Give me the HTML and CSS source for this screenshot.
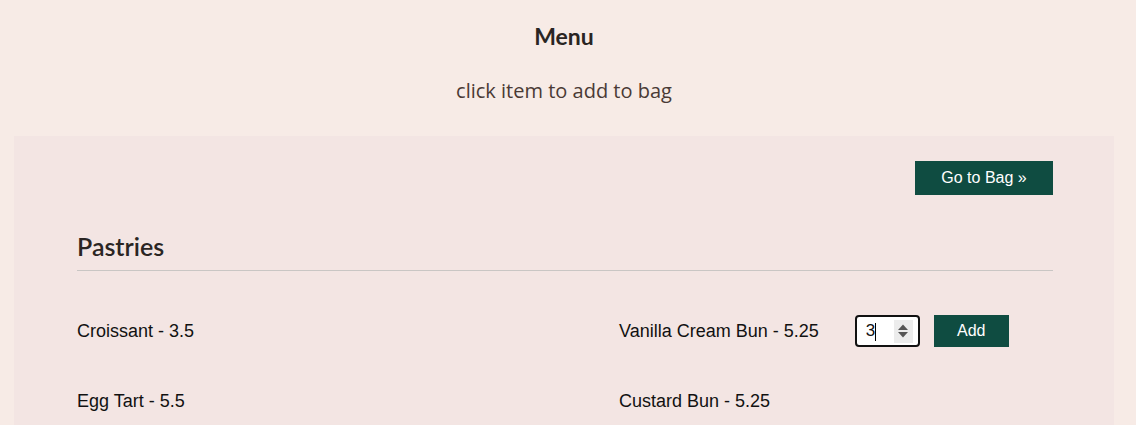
FILE: index.html
```html
<!DOCTYPE html>
<html>
<head>
<meta charset="utf-8">
<link rel="stylesheet" href="styles.css">
</head>
<body>
<header class="top">
  <h1 class="title">Menu</h1>
  <p class="subtitle">click item to add to bag</p>
</header>
<main class="panel">
  <div class="actions">
    <button class="btn bag-btn">Go to Bag »</button>
  </div>
  <section class="category">
    <h2 class="cat-title">Pastries</h2>
    <div class="items">
      <div class="item"><span class="item-name">Croissant - 3.5</span></div>
      <div class="item">
        <span class="item-name">Vanilla Cream Bun - 5.25</span>
        <div class="qty">
          <input class="qty-input" type="text" value="3">
          <span class="caret"></span>
          <span class="spin">
            <svg width="16" height="20" viewBox="0 0 16 20"><path d="M3 9 L8 3.5 L13 9 Z" fill="#555"/><path d="M3 11 L8 16.5 L13 11 Z" fill="#555"/></svg>
          </span>
        </div>
        <button class="btn add-btn">Add</button>
      </div>
      <div class="item"><span class="item-name">Egg Tart - 5.5</span></div>
      <div class="item"><span class="item-name">Custard Bun - 5.25</span></div>
    </div>
  </section>
</main>
</body>
</html>
```
FILE: styles.css
```css
* { box-sizing: border-box; }
html, body { margin: 0; padding: 0; }
body {
  background: #f7ebe6;
  font-family: "Liberation Sans", Arial, sans-serif;
  color: #111;
  padding: 0 22px 0 14px;
  overflow: hidden;
}
.top {
  display: flex;
  flex-direction: column;
  align-items: center;
  padding-top: 21px;
  height: 136px;
}
.title {
  margin: 0;
  font-family: "Lato", "Open Sans", sans-serif;
  font-weight: 700;
  font-size: 23px;
  color: #2a2523;
  line-height: 30px;
}
.subtitle {
  margin: 27px 0 0;
  font-family: "Open Sans", sans-serif;
  font-size: 20px;
  color: #4a3a35;
  line-height: 26px;
}
.panel {
  background: #f3e5e3;
  padding: 25px 61px 40px 63px;
  min-height: 400px;
}
.actions {
  display: flex;
  justify-content: flex-end;
}
.btn {
  background: #0f4c41;
  color: #fff;
  border: none;
  font-family: "Liberation Sans", Arial, sans-serif;
  font-size: 16px;
  cursor: pointer;
}
.bag-btn {
  width: 138px;
  height: 34px;
}
.category { margin-top: 36px; }
.cat-title {
  margin: 0;
  font-family: "Lato", "Open Sans", sans-serif;
  font-weight: 600;
  font-size: 25px;
  color: #2a2523;
  line-height: 30px;
  padding-bottom: 9px;
  border-bottom: 1px solid #c9c6c4;
}
.items {
  display: grid;
  grid-template-columns: 542px 1fr;
  row-gap: 38px;
  padding-top: 44px;
}
.item {
  display: flex;
  align-items: center;
  height: 32px;
}
.item-name {
  font-size: 18px;
  color: #111;
}
.qty {
  position: relative;
  margin-left: 36px;
  width: 65px;
  height: 32px;
  border: 2px solid #111;
  border-radius: 4px;
  background: #fff;
  display: flex;
  align-items: center;
}
.qty-input {
  border: none;
  outline: none;
  width: 34px;
  padding: 0 0 0 9px;
  font-family: "Liberation Sans", Arial, sans-serif;
  font-size: 17px;
  background: transparent;
  color: #111;
}
.caret {
  position: absolute;
  left: 18px;
  top: 6px;
  width: 1px;
  height: 18px;
  background: #000;
}
.spin {
  margin-left: auto;
  margin-right: 5px;
  width: 19px;
  height: 23px;
  background: #ececec;
  display: flex;
  align-items: center;
  justify-content: center;
}
.add-btn {
  margin-left: 14px;
  width: 75px;
  height: 32px;
}
```
